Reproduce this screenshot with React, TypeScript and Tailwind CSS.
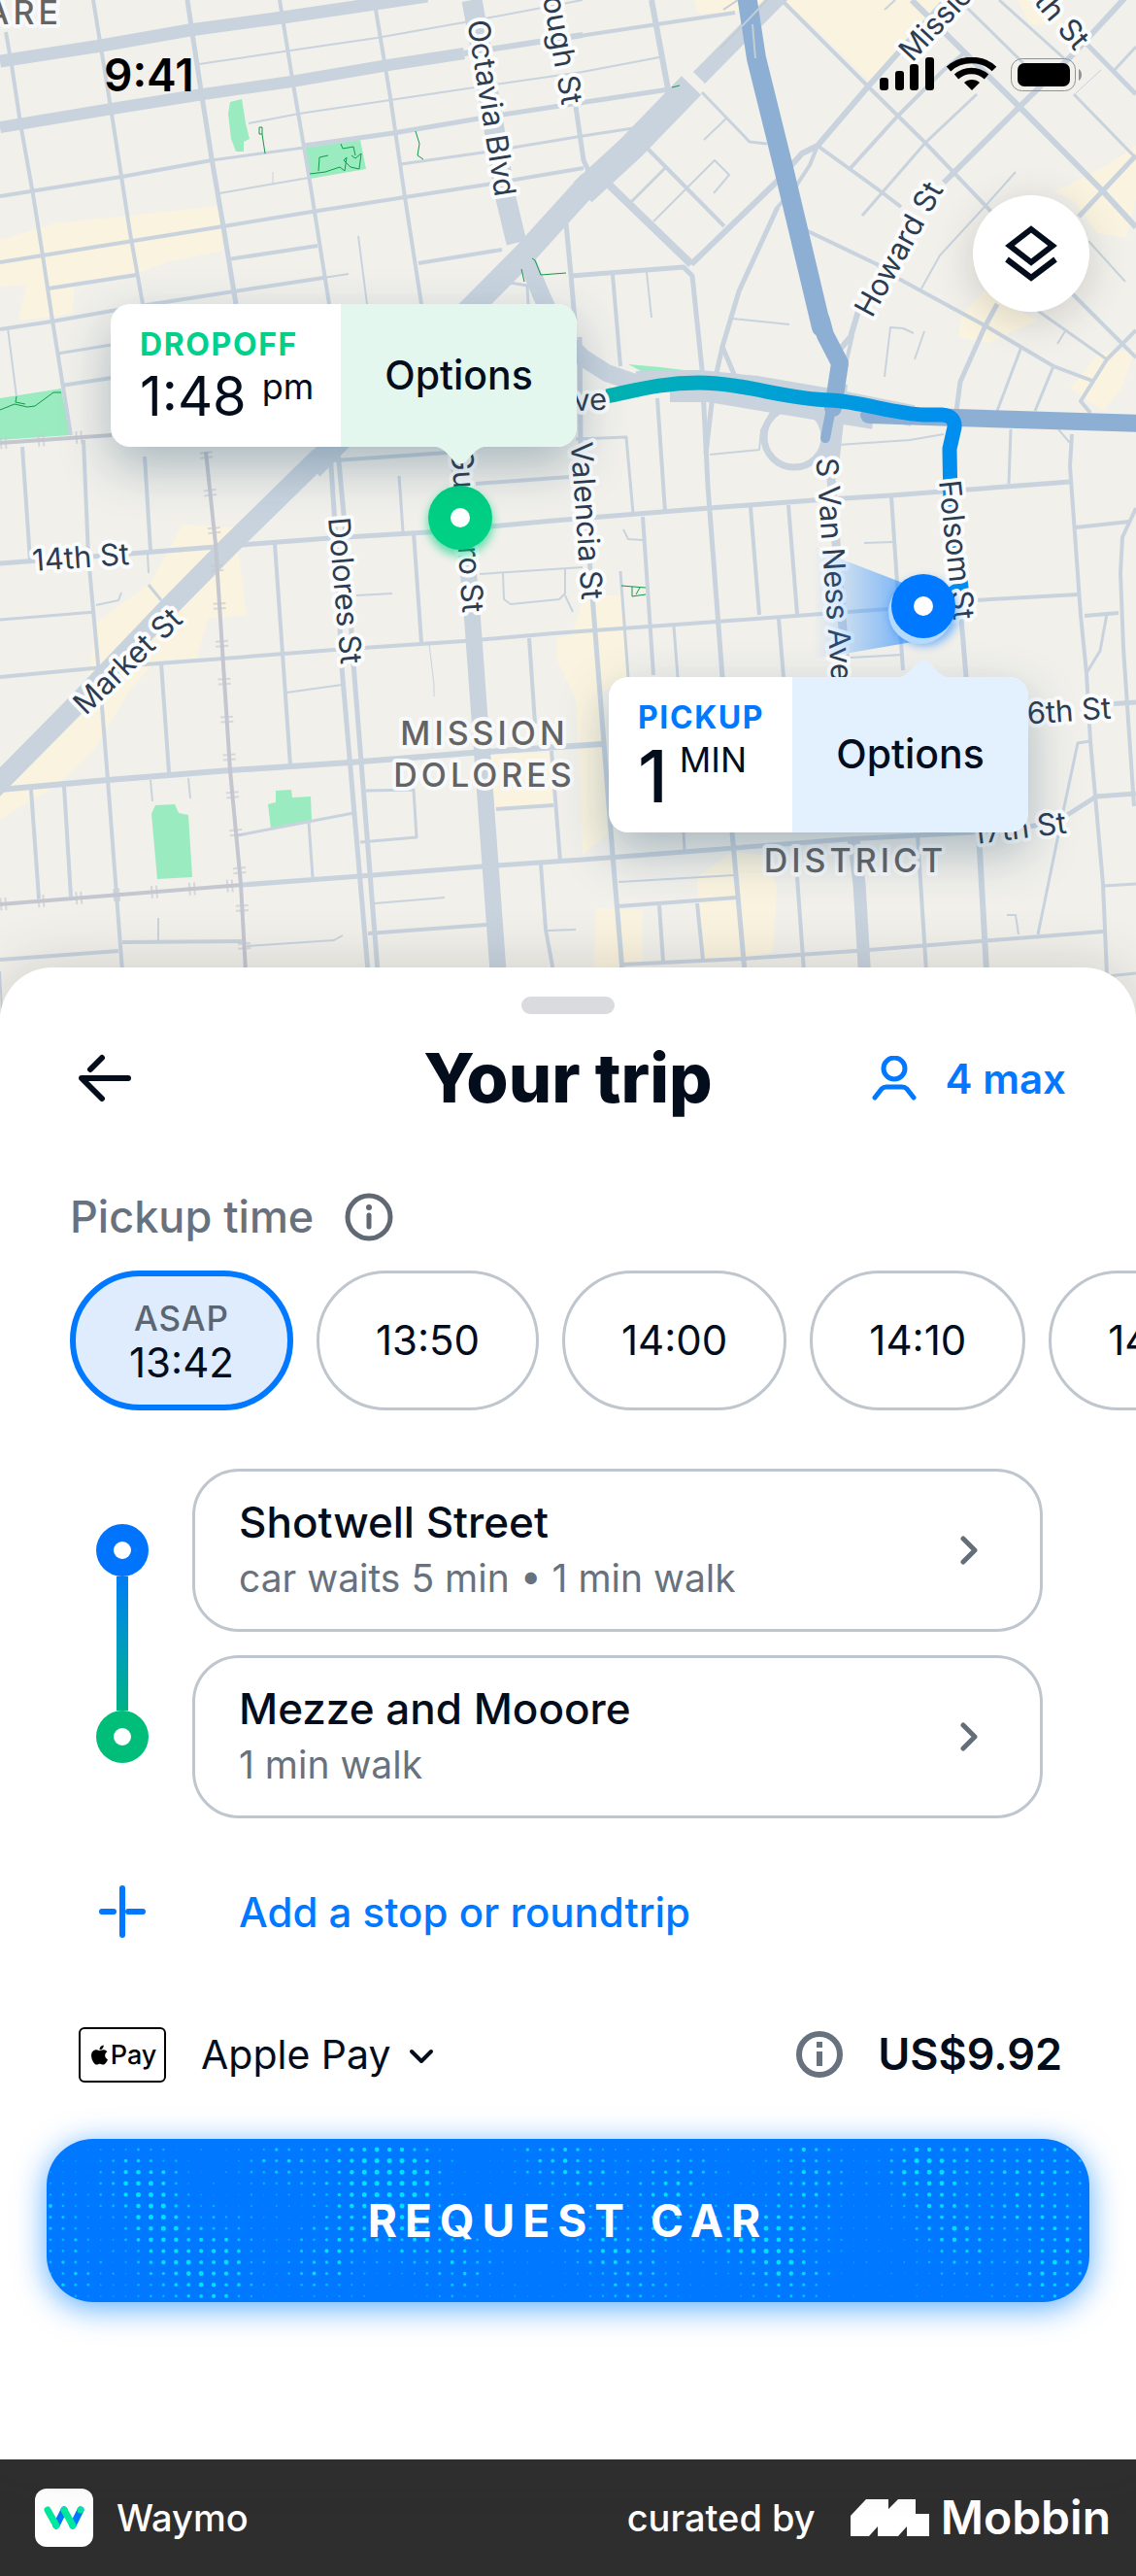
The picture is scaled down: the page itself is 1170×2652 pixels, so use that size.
import { useState } from "react";
import { FaApple } from "react-icons/fa6";

type Line = [number, string];

// [stroke width, points]
const streets: Line[] = [
  [13, "0,63 104,47 195,31 291,18 440,-4"],
  [12, "0,131 115,112 209,97 300,84 400,67 478,55"],
  [6, "478,55 600,36"],
  [4, "0,202 125,182 218,165"],
  [3, "218,165 313,152"],
  [5, "313,150 405,137 505,120 570,110 689,92"],
  [4, "0,270 137,248 230,233 321,218 417,203 501,190 601,173"],
  [4, "0,339 53,331 115,320 157,313 241,300 333,286"],
  [2, "333,286 359,282"],
  [3, "59,364 115,355"],
  [4, "63,397 115,389"],
  [4, "50,297 141,283"],
  [4, "235,267 327,253"],
  [4, "431,271 517,257"],
  [2, "226,199 283,189 318,183"],
  [1, "281,177 281,190"],
  [2, "205,66 299,52 388,39 478,23 505,18 600,0"],
  [2, "256,127 308,117 402,103 482,91 600,74 679,59"],
  [3, "413,169 497,157 600,140 652,132"],
  [4, "6,33 12,67 21,127 34,200 44,263 54,330 73,448"],
  [4, "96,0 115,117 134,240 147,313"],
  [5, "193,0 198,34 207,93 218,163 230,233 243,313"],
  [4, "288,0 302,87 318,180 339,313"],
  [4, "387,10 402,100 417,203 434,313"],
  [2, "369,243 378,313"],
  [2, "8,338 17,408"],
  [3, "519,290 543,294 544,313"],
  [6, "671,0 689,97"],
  [5, "593,110 601,165 608,180"],
  [5, "583,230 588,283 592,330"],
  [5, "588,284 704,275 713,284 723,380 729,500 744,697 754,857 767,1000"],
  [8, "625,188 712,272"],
  [6, "712,272 800,187 826,158 842,150 895,88 990,-18"],
  [4, "842,150 834,170 819,193 801,213"],
  [4, "631,283 639,377"],
  [2, "666,280 671,327"],
  [5, "801,213 761,300 744,357 758,390"],
  [5, "744,357 735,397 727,467"],
  [2, "754,328 813,334"],
  [4, "590,38 757,13"],
  [4, "666,152 746,233"],
  [3, "650,208 685,173"],
  [2, "673,228 736,165 751,180 735,199"],
  [3, "723,95 772,146 790,148"],
  [2, "725,144 749,121"],
  [4, "805,0 893,88 953,147 1020,217 1104,302 1170,368"],
  [3, "888,222 953,147 1006,97"],
  [4, "876,173 924,120 972,72 995,53"],
  [4, "842,150 907,197 928,213"],
  [4, "830,237 903,272 922,285 1014,335 1085,377 1125,392"],
  [6, "972,188 1050,110 1106,55 1175,-20"],
  [6, "884,320 876,347 863,362"],
  [4, "878,345 864,405"],
  [6, "939,0 1050,110 1136,197 1170,234"],
  [3, "995,7 1054,65"],
  [3, "1029,0 1098,62"],
  [3, "1106,97 1170,163"],
  [5, "1117,43 1170,97"],
  [3, "1148,72 1170,48"],
  [5, "1111,223 1170,160"],
  [1, "1107,97 1134,72"],
  [5, "1027,313 1014,337 989,393 985,423"],
  [2, "949,297 968,263 1014,213 1046,177"],
  [3, "1069,320 1140,370"],
  [4, "1170,340 1140,370 1113,413 1123,425"],
  [3, "1052,357 1027,423"],
  [3, "1085,377 1066,423"],
  [2, "1121,248 1159,290"],
  [2, "911,388 917,337 930,338 941,343"],
  [2, "942,370 952,341"],
  [2, "911,10 922,0"],
  [2, "1089,354 1097,341"],
  [2, "731,468 782,463 784,443 798,417"],
  [2, "863,458 937,453 972,447"],
  [3, "1041,442 1039,498"],
  [4, "1104,447 1102,480 1113,633 1119,693 1123,763 1136,910 1142,1050"],
  [2, "1090,442 1102,456"],
  [4, "677,410 685,527"],
  [3, "593,452 645,450 652,528"],
  [5, "597,347 598,457 610,613 631,880 641,1000"],
  [4, "23,460 31,577"],
  [4, "86,453 91,573 105,727 111,803 126,1000"],
  [4, "149,470 155,567"],
  [2, "152,570 153,590"],
  [3, "153,602 166,618"],
  [5, "0,580 134,570 222,563 340,554 440,548 570,536 731,523 838,515 918,510 1102,496"],
  [4, "345,474 490,464"],
  [4, "490,498 586,491"],
  [4, "283,560 291,673 299,788"],
  [5, "340,465 345,540 352,687 379,1000"],
  [5, "348,465 355,540 364,683 389,1000"],
  [4, "426,548 434,662"],
  [3, "411,490 415,547"],
  [17, "472,470 486,630 513,1000"],
  [3, "0,638 98,630"],
  [2, "99,623 122,618 125,610"],
  [4, "0,697 96,688 230,678 344,669 478,660 570,652 738,640 914,627"],
  [4, "1004,618 1110,612"],
  [4, "1117,634 1152,631"],
  [4, "166,683 174,795"],
  [6, "0,813 111,803 237,793 360,785 486,775 620,766"],
  [5, "1125,726 1170,723"],
  [2, "295,713 352,705"],
  [1, "442,663 447,705 447,717"],
  [4, "545,657 551,745"],
  [2, "155,803 157,825"],
  [2, "194,801 196,822"],
  [4, "32,813 40,925"],
  [4, "66,810 73,923"],
  [5, "249,911 371,902 497,892 600,885 757,873 872,864 1000,857 1085,848 1129,820 1170,817"],
  [3, "245,860 364,837"],
  [3, "318,847 322,903"],
  [3, "377,814 426,813 429,862 371,867"],
  [2, "386,930 458,924"],
  [4, "379,961 501,952"],
  [4, "126,970 249,969"],
  [2, "254,974 344,968 353,963"],
  [4, "0,988 122,979"],
  [2, "163,945 163,968"],
  [4, "511,833 570,829"],
  [4, "568,773 577,887"],
  [4, "557,890 562,957 570,1000"],
  [2, "564,958 593,957"],
  [2, "367,613 404,611"],
  [2, "494,591 600,584"],
  [2, "518,590 519,617 526,622 576,617 582,611 582,586"],
  [2, "582,613 590,630"],
  [4, "662,532 673,695"],
  [3, "639,588 647,697"],
  [3, "694,645 698,697"],
  [4, "773,522 782,633"],
  [4, "812,520 821,632"],
  [4, "802,637 807,697"],
  [4, "918,511 930,690"],
  [2, "890,559 919,558"],
  [2, "876,677 930,674"],
  [2, "642,545 647,555 662,556"],
  [9, "855,480 872,700"],
  [5, "987,600 995,697"],
  [6, "1008,857 1016,1000"],
  [4, "1108,543 1163,537"],
  [4, "1170,523 1156,553 1154,590 1157,667 1168,830"],
  [3, "1119,693 1133,670 1140,632"],
  [3, "1123,763 1110,765 1094,840 1069,962"],
  [2, "1037,942 1046,942 1049,962"],
  [4, "641,993 765,987 895,978 1136,959"],
  [2, "637,908 756,901"],
  [4, "637,933 759,924"],
  [4, "679,932 683,990"],
  [4, "718,930 724,988"],
  [4, "821,903 828,1000"],
  [13, "879,863 885,910 891,1010"],
  [4, "945,860 954,1000"],
  [3, "704,857 705,875"],
  [3, "1136,912 1170,910"],
  [3, "1140,1005 1170,1002"],
  [2, "0,1000 2,1040"],
];

const arterials: Line[] = [
  [21, "486,0 497,60 520,200 532,250"],
  [18, "540,262 558,305 577,345 600,368 625,384 660,396"],
  [17, "805,-6 720,80"],
  [28, "712,88 650,152 600,198"],
  [24, "608,187 540,262 321,482"],
  [21, "330,470 237,561 172,627 77,727 -10,815"],
  [22, "655,393 720,392 780,398 850,410 940,428"],
  [24, "690,402 730,402 850,422 900,430"],
  [18, "864,395 855,480"],
];

const highways: Line[] = [
  [20, "769,-5 779,60 807,173 846,337"],
  [18, "846,330 850,345 865,374 858,420"],
  [10, "858,410 850,451"],
  [18, "895,427 985,430 1175,436"],
];

const rails: string[] = [
  "212,465 222,560 237,793 248,910 253,1000",
  "0,931 249,911",
  "0,456 115,448",
];

const commercial: string[] = [
  "0,247 57,230 226,212 230,258 172,270 145,280 77,290 75,323 19,330 27,293 0,295",
  "715,0 995,0 926,60 895,83 838,28 808,0 757,12 719,14",
  "1048,0 1079,0 1095,25 1060,25",
  "1170,150 1140,170 1087,197 1106,207 1130,240 1160,245 1170,205",
  "991,323 1014,300 1068,330 1018,353 987,347",
  "1170,360 1132,363 1102,400 1136,423 1155,400",
  "188,540 242,543 254,633 214,637 203,677 161,680 134,710 96,773 61,807 0,843 0,800 90,700 100,640 155,600",
  "601,613 639,613 647,697 620,713 628,857 600,880 593,720 574,680 574,657 589,653",
  "505,777 568,775 570,828 510,832",
  "718,903 754,877 788,880 800,913 796,980 723,993",
  "614,935 662,937 662,993 612,997",
];

const parks: string[] = [
  "237,105 249,102 253,127 257,143 251,146 251,156 243,156 238,143 235,117",
  "314,152 371,144 377,174 319,184",
  "0,410 63,400 72,448 0,453",
  "160,829 180,828 184,837 194,839 198,903 162,905 156,838",
  "284,814 300,813 301,821 320,820 321,844 279,853 276,828 284,826",
  "647,375 680,378 712,382 696,387 662,383",
];

const paths: string[] = [
  "267,131 270,131 270,138 267,138 267,131",
  "270,138 273,158",
  "428,135 432,148 430,160 436,164",
  "319,179 335,177 350,172 355,176 357,162 354,165 361,172 370,174 372,158 366,163 362,160",
  "328,176 329,162 338,160",
  "351,148 353,153 364,151 366,160",
  "548,266 551,268 557,283 583,281",
  "537,277 540,290",
  "0,422 15,416 28,419 36,418 55,404 63,404",
  "17,408 16,414 26,416",
  "640,603 665,605",
  "651,604 651,614 665,612",
  "655,612 659,605",
  "692,90 700,88",
];

type Label = { text: string; x: number; y: number; angle: number; anchor?: "start" | "end" };

const labels: Label[] = [
  { text: "14th St", x: 83, y: 573, angle: -4 },
  { text: "Market St", x: 131, y: 680, angle: -44 },
  { text: "Dolores St", x: 356, y: 608, angle: 85 },
  { text: "Guerrero St", x: 482, y: 546, angle: 86 },
  { text: "Octavia Blvd", x: 507, y: 111, angle: 81 },
  { text: "Gough St", x: 590, y: 107, angle: 80, anchor: "end" },
  { text: "Mission St", x: 931, y: 57, angle: -47, anchor: "start" },
  { text: "10th St", x: 1116, y: 46, angle: 50, anchor: "end" },
  { text: "Howard St", x: 925, y: 256, angle: -61 },
  { text: "Duboce Ave", x: 625, y: 410, angle: -3, anchor: "end" },
  { text: "Valencia St", x: 605, y: 536, angle: 86 },
  { text: "S Van Ness Ave", x: 860, y: 586, angle: 86 },
  { text: "Folsom St", x: 986, y: 566, angle: 84 },
  { text: "16th St", x: 1144, y: 728, angle: -4, anchor: "end" },
  { text: "17th St", x: 1098, y: 846, angle: -7, anchor: "end" },
];

const districts = [
  { text: "SQUARE", x: 64, y: 25, anchor: "end" as const },
  { text: "MISSION", x: 499, y: 767, anchor: "middle" as const },
  { text: "DOLORES", x: 499, y: 810, anchor: "middle" as const },
  { text: "DISTRICT", x: 881, y: 898, anchor: "middle" as const },
];

function Lines({ items }: { items: Line[] }) {
  return (
    <>
      {items.map(([width, points], i) => (
        <polyline key={i} points={points} strokeWidth={width} />
      ))}
    </>
  );
}

function CityMap() {
  return (
    <svg viewBox="0 0 1170 1044" className="block w-full" aria-label="Map">
      <defs>
        <linearGradient id="route" gradientUnits="userSpaceOnUse" x1="625" y1="408" x2="985" y2="430">
          <stop offset="0" stopColor="#00b3b0" />
          <stop offset="0.5" stopColor="#00a0d6" />
          <stop offset="1" stopColor="#008ef0" />
        </linearGradient>
        <linearGradient id="beam" x1="0" y1="0" x2="1" y2="0">
          <stop offset="0" stopColor="#2e8fff" stopOpacity="0" />
          <stop offset="1" stopColor="#2e8fff" stopOpacity="0.7" />
        </linearGradient>
        <filter id="glow" x="-50%" y="-50%" width="200%" height="200%">
          <feGaussianBlur stdDeviation="5" />
        </filter>
      </defs>
      <rect width="1170" height="1044" fill="#f1f0eb" />
      <g fill="#faf3df">
        {commercial.map((p) => <polygon key={p} points={p} />)}
      </g>
      <g fill="#9bebc0">
        {parks.map((p) => <polygon key={p} points={p} />)}
      </g>
      <g fill="none" stroke="#c8d3de" strokeLinejoin="round">
        <Lines items={streets} />
        <circle cx="818" cy="450" r="31" strokeWidth="7" />
        <Lines items={arterials} />
      </g>
      <g fill="none" stroke="#c4c7d0">
        {rails.map((p) => (
          <g key={p}>
            <polyline points={p} strokeWidth="4" />
            <polyline points={p} strokeWidth="13" strokeDasharray="2 3 2 32" opacity="0.6" />
          </g>
        ))}
      </g>
      <g fill="none" stroke="#119a4a" strokeWidth="1">
        {paths.map((p) => <polyline key={p} points={p} />)}
      </g>
      <g fill="none" stroke="#8dafd3" strokeLinejoin="round" strokeLinecap="round">
        <Lines items={highways} />
      </g>
      <path d="M745 10 L760 0 M742 50 L790 0 M775 25 L778 60" stroke="#c4cdd6" strokeWidth="2" fill="none" />
      <path
        d="M625 408 C655 402 680 394 720 394 C765 394 810 411 855 412 C890 414 920 426 952 427 L970 427 Q984 428 983 440 L978 462 L979 520 L990 605 L965 622"
        fill="none"
        stroke="url(#route)"
        strokeWidth="15"
        strokeLinejoin="round"
      />
      <path d="M474 460 L478 520" stroke="#8fdcd2" strokeWidth="14" />

      <g className="fill-[#2d3c50] text-[31px]" stroke="#fbfcfd" strokeWidth="8" strokeLinejoin="round" style={{ paintOrder: "stroke" }}>
        {labels.map((l) => (
          <text
            key={l.text}
            x={l.x}
            y={l.y}
            textAnchor={l.anchor ?? "middle"}
            dominantBaseline="central"
            transform={`rotate(${l.angle} ${l.x} ${l.y})`}
          >
            {l.text}
          </text>
        ))}
      </g>
      <g className="fill-[#656464] text-[34px] font-medium tracking-[4px]" stroke="#f8f9fa" strokeWidth="8" strokeLinejoin="round" style={{ paintOrder: "stroke" }}>
        {districts.map((d) => (
          <text key={d.text} x={d.x} y={d.y} textAnchor={d.anchor}>{d.text}</text>
        ))}
      </g>

      <polygon points="838,562 870,577 940,604 945,660 870,673 838,678" fill="url(#beam)" />
      <circle cx="474" cy="538" r="34" fill="#00d084" opacity="0.6" filter="url(#glow)" />
      <circle cx="474" cy="533" r="33" fill="#00d084" />
      <circle cx="474" cy="533" r="10" fill="#fff" />
      <circle cx="952" cy="630" r="35" fill="#0078ff" opacity="0.5" filter="url(#glow)" />
      <circle cx="948" cy="630" r="33" fill="#b5dafc" />
      <circle cx="951" cy="624" r="33" fill="#0078ff" />
      <circle cx="951" cy="624" r="10" fill="#fff" />
    </svg>
  );
}

function StatusBar() {
  return (
    <div className="absolute inset-x-0 top-0 flex items-center justify-between pt-[50px] pr-[54px] pl-[107px]">
      <span className="text-[46px] leading-[54px] font-semibold text-black">9:41</span>
      <svg width="210" height="36" viewBox="0 0 210 36" aria-hidden="true">
        <rect x="0" y="21" width="9" height="13" rx="3" />
        <rect x="16" y="14" width="9" height="20" rx="3" />
        <rect x="31" y="7" width="9" height="27" rx="3" />
        <rect x="47" y="0" width="9" height="34" rx="3" />
        <g fill="none" stroke="#000" strokeWidth="6.5">
          <path d="M71 12 C84 0 106 0 118 12" />
          <path d="M79 20 C88 12 101 12 110 20" />
        </g>
        <path d="M95 34 L87 26 C91 22 99 22 103 26 Z" />
        <rect x="135.500" y="1.500" width="66" height="33" rx="11" fill="none" stroke="#8f9296" strokeWidth="1" />
        <rect x="142" y="6" width="54" height="24" rx="7" />
        <path d="M205 12 C209 14 209 22 205 24 Z" fill="#8f9296" />
      </svg>
    </div>
  );
}

function ArrowTip({ className }: { className: string }) {
  return (
    <svg width="66" height="20" viewBox="0 0 66 20" className={className} aria-hidden="true">
      <path d="M0 0 C14 0 18 6 25 14 C30 20 36 20 41 14 C48 6 52 0 66 0 Z" fill="currentColor" />
    </svg>
  );
}

function InfoIcon() {
  return (
    <svg width="50" height="50" viewBox="0 0 50 50" fill="none" stroke="#5f6873" strokeWidth="5" strokeLinecap="round" aria-hidden="true">
      <circle cx="25" cy="25" r="22" />
      <path d="M25 23 V35" />
      <circle cx="25" cy="15" r="3" fill="#5f6873" stroke="none" />
    </svg>
  );
}

function Chevron() {
  return (
    <svg width="18" height="30" viewBox="0 0 18 30" fill="none" stroke="#646e79" strokeWidth="5" strokeLinecap="round" strokeLinejoin="round" aria-hidden="true">
      <path d="M3 3 L15 15 L3 27" />
    </svg>
  );
}

const times = ["13:50", "14:00", "14:10", "14:20"];

const stops = [
  { name: "Shotwell Street", detail: "car waits 5 min • 1 min walk" },
  { name: "Mezze and Mooore", detail: "1 min walk" },
];

// bright spots of the button's dot pattern
const hotspots = [
  [338, 48], [365, 25], [375, 50], [312, 90], [312, 20], [120, 90], [182, 113], [178, 159], [281, 132], [105, 65],
  [430, 132], [4, 78], [515, 13], [94, 35], [606, 147], [560, 32], [650, 32], [752, 109], [790, 60], [920, 20],
  [920, 78], [713, 101], [890, 28], [1031, 145], [1058, 109], [1046, 17], [981, 17], [947, 112], [637, 78], [25, 140],
  [240, 25], [575, 110], [780, 10], [770, 140], [1010, 75], [130, 140], [380, 100],
];

function DotPattern() {
  const dots = [];
  for (let row = 0; row < 14; row++) {
    for (let col = 0; col < 83; col++) {
      const x = 4 + col * 12.93;
      const y = 11 + row * 11.6;
      const heat = hotspots.reduce((sum, [hx, hy]) => sum + Math.exp(-((x - hx) ** 2 + (y - hy) ** 2) / 1300), 0);
      const noise = Math.abs(Math.sin(col * 12.9 + row * 78.2) * 43758.5) % 1;
      const r = Math.min(2.5, 0.3 + heat * 1.1 + noise * 0.6);
      dots.push(<circle key={`${row}-${col}`} cx={x} cy={y} r={r} opacity={Math.min(1, r / 2)} />);
    }
  }
  return (
    <svg viewBox="0 0 1074 168" preserveAspectRatio="xMidYMid slice" className="absolute inset-0 h-full w-full fill-[#00e0ff]" aria-hidden="true">
      {dots}
    </svg>
  );
}

export default function App() {
  const [time, setTime] = useState("13:42");

  return (
    <div className="font-[Inter,'Liberation_Sans',sans-serif] overflow-hidden bg-white text-[#030d1c]">
      <section className="relative">
        <CityMap />
        <StatusBar />

        <button aria-label="Map layers" className="absolute top-[201px] right-12 flex size-[120px] items-center justify-center rounded-full bg-white shadow-[0_8px_40px_rgba(60,60,60,0.2)]">
          <svg width="56" height="60" viewBox="0 0 56 60" fill="none" stroke="currentColor" strokeWidth="6">
            <path d="M28 5 L50 22 L28 39 L6 22 Z" />
            <path d="M3 36 L28 55 L53 36" />
          </svg>
        </button>

        <div className="absolute top-[313px] left-[114px] flex h-[147px] w-[480px] rounded-[20px] bg-white shadow-[0_20px_50px_rgba(40,80,110,0.35)]">
          <div className="flex w-[237px] flex-col pt-[22px] pl-[30px]">
            <span className="text-[32px] leading-10 font-bold tracking-wider text-[#00d08a]">DROPOFF</span>
            <span className="flex gap-4">
              <span className="text-[56px] leading-[66px]">1:48</span>
              <span className="text-[36px] leading-[46px]">pm</span>
            </span>
          </div>
          <button className="flex-1 rounded-r-[20px] bg-[#e3f7ef] text-[41px] font-medium">Options</button>
          <ArrowTip className="absolute top-[146px] left-[327px] text-[#e3f7ef]" />
        </div>

        <div className="absolute top-[697px] left-[627px] flex h-40 w-[432px] rounded-[20px] bg-white shadow-[0_20px_50px_rgba(40,80,110,0.35)]">
          <div className="flex w-[189px] flex-col pt-[22px] pl-[30px]">
            <span className="text-[32px] leading-10 font-bold tracking-wider text-[#0078ff]">PICKUP</span>
            <span className="flex gap-3">
              <span className="text-[74px] leading-[80px] font-medium">1</span>
              <span className="text-[36px] leading-[46px]">MIN</span>
            </span>
          </div>
          <button className="flex-1 rounded-r-[20px] bg-[#e3f0fd] text-[41px] font-medium">Options</button>
          <ArrowTip className="absolute -top-[19px] left-[291px] rotate-180 text-[#e3f0fd]" />
        </div>
      </section>

      <main className="relative -mt-12 rounded-t-[54px] bg-white pt-[30px] pb-[162px] shadow-[0_0_60px_rgba(60,60,60,0.2)]">
        <div className="mx-auto h-[18px] w-24 rounded-full bg-[#d9dbdf]" />

        <header className="mt-[30px] grid h-[72px] grid-cols-[1fr_auto_1fr] items-center px-[72px]">
          <button aria-label="Back" className="justify-self-start pl-2">
            <svg width="56" height="50" viewBox="0 0 56 50" fill="none" stroke="currentColor" strokeWidth="6" strokeLinecap="round" strokeLinejoin="round">
              <path d="M52 25 H4 L25 46 M13 16 L25 4" />
            </svg>
          </button>
          <h1 className="text-[70px] leading-[72px] font-extrabold">Your trip</h1>
          <button className="flex items-center gap-[30px] justify-self-end text-[42px] font-semibold text-[#0078ff]">
            <svg width="46" height="46" viewBox="0 0 46 46" fill="none" stroke="currentColor" strokeWidth="5" strokeLinecap="round" strokeLinejoin="round" aria-hidden="true">
              <circle cx="23" cy="13" r="11" />
              <path d="M3 43 L10 34 Q12 32 15 32 H31 Q34 32 36 34 L43 43" />
            </svg>
            4 max
          </button>
        </header>

        <div className="mt-20 flex h-[54px] items-center gap-8 pl-[72px]">
          <h2 className="text-[45px] leading-[54px] font-medium text-[#68727e]">Pickup time</h2>
          <button aria-label="About pickup time"><InfoIcon /></button>
        </div>

        <div className="mt-7 flex gap-6 overflow-hidden pl-[72px] text-[42px] leading-[46px]">
          <button
            onClick={() => setTime("13:42")}
            aria-pressed={time === "13:42"}
            className="h-36 shrink-0 rounded-full border-[6px] border-[#0078ff] bg-[#deecfe] px-[55px]"
          >
            <span className="block text-[35px] font-medium tracking-wide text-[#5b6673]">ASAP</span>
            13:42
          </button>
          {times.map((t) => (
            <button
              key={t}
              onClick={() => setTime(t)}
              aria-pressed={time === t}
              className="h-36 shrink-0 rounded-full border-[3px] border-[#bfc6ce] px-[58px]"
            >
              {t}
            </button>
          ))}
        </div>

        <div className="mt-[60px] flex gap-[45px] pr-24 pl-[99px]">
          <div className="flex flex-col items-center py-[57px]">
            <span className="flex size-[54px] items-center justify-center rounded-full bg-[#0074fc]">
              <span className="size-[18px] rounded-full bg-white" />
            </span>
            <span className="w-3 flex-1 bg-linear-to-b from-[#007cf4] to-[#00b184]" />
            <span className="flex size-[54px] items-center justify-center rounded-full bg-[#00be7a]">
              <span className="size-[18px] rounded-full bg-white" />
            </span>
          </div>
          <div className="flex flex-1 flex-col gap-6">
            {stops.map((s) => (
              <button key={s.name} className="flex h-[168px] items-center justify-between rounded-[48px] border-[3px] border-[#bfc6ce] pr-16 pl-[45px] text-left">
                <span>
                  <span className="block text-[44px] leading-[58px] font-medium">{s.name}</span>
                  <span className="block text-[39px] leading-[58px] text-[#68727e]">{s.detail}</span>
                </span>
                <Chevron />
              </button>
            ))}
          </div>
        </div>

        <button className="mt-[66px] ml-[99px] flex h-[60px] items-center gap-[93px] text-[42px] font-medium text-[#0078ff]">
          <svg width="54" height="54" viewBox="0 0 54 54" fill="none" stroke="currentColor" strokeWidth="6" strokeLinecap="round" aria-hidden="true">
            <path d="M27 3 V51 M33 27 H48 M6 27 H18" />
          </svg>
          Add a stop or roundtrip
        </button>

        <div className="mt-[87px] flex h-[60px] items-center pr-[76px] pl-[81px]">
          <span className="flex h-[57px] w-[90px] items-center justify-center rounded-md border-2 border-black text-[27px] leading-none font-medium text-black">
            <FaApple size={23} />
            Pay
          </span>
          <div className="relative ml-9">
            <select aria-label="Payment method" className="appearance-none bg-transparent pr-11 text-[41px] leading-[60px]">
              <option>Apple Pay</option>
            </select>
            <svg width="26" height="16" viewBox="0 0 26 16" fill="none" stroke="currentColor" strokeWidth="4" strokeLinecap="round" strokeLinejoin="round" className="pointer-events-none absolute top-[24px] right-0" aria-hidden="true">
              <path d="M3 3 L13 13 L23 3" />
            </svg>
          </div>
          <button aria-label="Fare details" className="ml-auto">
            <svg width="48" height="48" viewBox="0 0 48 48" fill="none" aria-hidden="true">
              <circle cx="24" cy="24" r="21" stroke="#68727e" strokeWidth="6" />
              <path d="M24 11 V17 M24 21 V36" stroke="#68727e" strokeWidth="6" />
            </svg>
          </button>
          <span className="ml-9 text-[45px] leading-[60px] font-semibold">US$9.92</span>
        </div>

        <div className="mt-[57px] px-12">
          <button className="relative block h-[168px] w-full overflow-hidden rounded-[48px] bg-[#0078ff] text-[46px] font-bold tracking-[8px] text-white shadow-[0_6px_32px_rgba(0,130,255,0.65)]">
            <DotPattern />
            <span className="relative">REQUEST CAR</span>
          </button>
        </div>
      </main>

      <footer className="flex h-[120px] items-center bg-[#2e2e2e] pr-[26px] pl-9 text-white">
        <span className="flex size-[60px] items-center justify-center rounded-xl bg-white">
          <svg width="60" height="60" viewBox="0 0 60 60" fill="none" strokeWidth="7" strokeLinecap="round" aria-hidden="true">
            <path d="M22 38 L30 22 M39 38 L47 22" stroke="#0078ff" />
            <path d="M13 22 L22 38 M30 22 L39 38 M47 22 V22.100" stroke="#00e89d" />
          </svg>
        </span>
        <span className="ml-6 text-[38px] font-medium">Waymo</span>
        <span className="ml-auto text-[38px] font-medium">curated by</span>
        <svg width="81" height="38" viewBox="0 0 81 38" className="ml-9" aria-hidden="true">
          <path d="M0 17 L16 0 H39 V10 L49 0 H67 V15 H81 V38 H58 V28 L49 38 H28 V28 L19 38 H0 Z" fill="#fff" />
        </svg>
        <span className="ml-3 text-[48px] leading-none font-semibold">Mobbin</span>
      </footer>
    </div>
  );
}
